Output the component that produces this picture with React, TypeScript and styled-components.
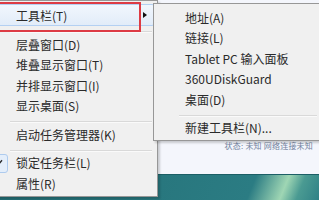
import React, { FC } from 'react';
import styled, { createGlobalStyle, css } from 'styled-components';

// page reset + the Win7 menu font (YaHei look-alike)
const GlobalStyle = createGlobalStyle`
  html, body {
    margin: 0;
    padding: 0;
    width: 319px;
    height: 200px;
    overflow: hidden;
    background: #f4f6fb;
  }
  body {
    font-family: "Noto Sans CJK SC", "Noto Sans", sans-serif;
  }
`;

const Desktop = styled.div`
  position: relative;
  width: 319px;
  height: 200px;
  overflow: hidden;
  display: flex;
  flex-direction: column;
`;

const Workspace = styled.div`
  height: 174px;
  background: #f4f6fc;
  display: flex;
  justify-content: flex-end;
  align-items: flex-start;
  padding: 141px 6px 0 0;
  box-sizing: border-box;
`;

const StatusText = styled.span`
  font-size: 8px;
  line-height: 9px;
  color: #7383a0;
  letter-spacing: 0.2px;
`;

const Taskbar = styled.div`
  flex: 1;
  border-top: 1px solid #1c5f66;
  background: linear-gradient(112deg, #236e75 0%, #2b7c83 78%, #9fd6b4 88%, #4a9a92 93%, #2f8186 100%);
`;

const Menu = styled.div<{ $left: number; $top: number; $width: number }>`
  position: absolute;
  left: ${(p) => p.$left}px;
  top: ${(p) => p.$top}px;
  width: ${(p) => p.$width}px;
  box-sizing: border-box;
  background: #f0f0f0;
  border: 1px solid #979797;
  box-shadow: 2px 2px 2px rgba(0, 0, 0, 0.18);
  padding: 3px 2px 2px;
  display: flex;
  flex-direction: column;
`;

const Item = styled.div<{ $active?: boolean; $tall?: boolean }>`
  position: relative;
  height: ${(p) => (p.$tall ? 22 : 20.5)}px;
  display: flex;
  align-items: center;
  padding-left: 29px;
  box-sizing: border-box;
  font-size: 12px;
  color: #2a2a2a;
  white-space: nowrap;
  border: 1px solid transparent;
  border-radius: 3px;
  ${(p) =>
    p.$active &&
    css`
      background: linear-gradient(#f1f6fd, #e2ecf9);
      border-color: #b4d0f2;
    `}
`;

const Label = styled.span`
  margin-left: -1px;
`;

const Arrow = styled.span`
  margin-left: auto;
  margin-right: 7px;
  width: 0;
  height: 0;
  border-left: 4px solid #111;
  border-top: 3.5px solid transparent;
  border-bottom: 3.5px solid transparent;
`;

const CheckBox = styled.span`
  position: absolute;
  left: 0;
  top: 0;
  width: 20px;
  height: 19px;
  box-sizing: border-box;
  border: 1px solid #aecbee;
  border-radius: 3px;
  background: #e4eefa;
  display: flex;
  align-items: center;
  justify-content: center;
`;

const Separator = styled.div`
  height: 1px;
  margin: 5px 3px 1px 23px;
  background: #d9d9d9;
  border-bottom: 1px solid #fafafa;
`;

// the red annotation frame drawn over the hovered item
const Callout = styled.div`
  position: absolute;
  left: -6px;
  top: 2px;
  width: 147px;
  height: 30px;
  box-sizing: border-box;
  border: 2px solid #dd3b44;
  pointer-events: none;
`;

type Entry = { label: string; sep?: boolean; checked?: boolean };

const mainItems: Entry[] = [
  { label: '层叠窗口(D)' },
  { label: '堆叠显示窗口(T)' },
  { label: '并排显示窗口(I)' },
  { label: '显示桌面(S)' },
  { label: '启动任务管理器(K)', sep: true },
  { label: '锁定任务栏(L)', sep: true, checked: true },
  { label: '属性(R)' },
];

const toolbarItems: Entry[] = [
  { label: '地址(A)' },
  { label: '链接(L)' },
  { label: 'Tablet PC 输入面板' },
  { label: '360UDiskGuard' },
  { label: '桌面(D)' },
  { label: '新建工具栏(N)...', sep: true },
];

const renderEntries = (entries: Entry[]) =>
  entries.map((e) => (
    <React.Fragment key={e.label}>
      {e.sep && <Separator />}
      <Item>
        {e.checked && (
          <CheckBox>
            <svg width="9" height="8" viewBox="0 0 9 8">
              <path d="M1 4.2 L3.4 6.6 L8 1.2" fill="none" stroke="#2b2b2b" strokeWidth="1.4" />
            </svg>
          </CheckBox>
        )}
        <Label>{e.label}</Label>
      </Item>
    </React.Fragment>
  ));

const App: FC = () => (
  <>
    <GlobalStyle />
    <Desktop>
      <Workspace>
        <StatusText>状态: 未知 网络连接未知</StatusText>
      </Workspace>
      <Taskbar />

      <Menu $left={-16} $top={0} $width={174}>
        <Item $active $tall>
          <Label>工具栏(T)</Label>
          <Arrow />
        </Item>
        <Separator />
        {renderEntries(mainItems)}
      </Menu>

      <Menu $left={153} $top={3} $width={170}>
        {renderEntries(toolbarItems)}
      </Menu>

      <Callout />
    </Desktop>
  </>
);

export default App;
